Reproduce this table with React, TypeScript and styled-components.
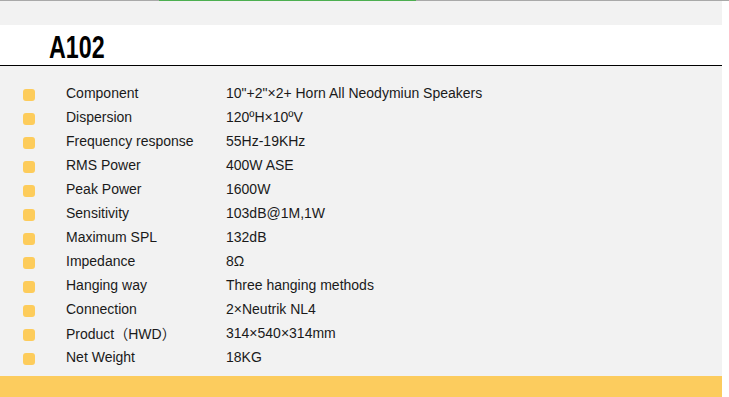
import React from 'react';
import styled, {createGlobalStyle} from 'styled-components';

const GlobalStyle = createGlobalStyle`
	html, body {
		margin: 0;
		padding: 0;
		background: #ffffff;
	}
	body {
		font-family: 'Liberation Sans', Arial, 'Noto Sans CJK SC', sans-serif;
		color: #1a1a1a;
	}
`;

const Page = styled.div`
	width: 722px;
	display: flex;
	flex-direction: column;
`;

const TopRule = styled.div`
	height: 1px;
	width: 729px;
	background: #a9a9a9;
	display: flex;
`;

const TopRuleAccent = styled.div`
	margin-left: 159px;
	width: 257px;
	height: 1px;
	background: #4caf50;
`;

const TopPanel = styled.div`
	height: 24px;
	background: #f2f2f2;
`;

const TitleBar = styled.div`
	height: 40px;
	background: #ffffff;
	border-bottom: 1px solid #000000;
	display: flex;
	align-items: center;
	padding-left: 49px;
`;

const Title = styled.h1`
	margin: 4px 0 0;
	font-family: 'Liberation Sans', Arial, sans-serif;
	font-size: 31px;
	font-weight: 700;
	color: #000000;
	line-height: 1;
	transform: scaleX(0.75);
	transform-origin: left center;
`;

const SpecPanel = styled.ul`
	list-style: none;
	margin: 0;
	padding: 15px 0 7px;
	background: #f2f2f2;
`;

const SpecRow = styled.li`
	height: 24px;
	display: flex;
	align-items: center;
	font-size: 14px;
`;

const Bullet = styled.span`
	width: 12px;
	height: 12px;
	margin-left: 23px;
	margin-top: 3px;
	border-radius: 3px;
	background: #fdcc5b;
	flex: none;
`;

const Label = styled.span`
	margin-left: 31px;
	width: 160px;
	flex: none;
`;

const Value = styled.span`
	white-space: nowrap;
`;

const FooterBand = styled.div`
	height: 21px;
	background: #fccc5e;
`;

const specs: [string, string][] = [
	['Component', '10"+2"×2+ Horn All Neodymiun Speakers'],
	['Dispersion', '120ºH×10ºV'],
	['Frequency response', '55Hz-19KHz'],
	['RMS Power', '400W ASE'],
	['Peak Power', '1600W'],
	['Sensitivity', '103dB@1M,1W'],
	['Maximum SPL', '132dB'],
	['Impedance', '8Ω'],
	['Hanging way', 'Three hanging methods'],
	['Connection', '2×Neutrik NL4'],
	['Product（HWD）', '314×540×314mm'],
	['Net Weight', '18KG'],
];

export default function App() {
	return (
		<>
			<GlobalStyle />
			<TopRule>
				<TopRuleAccent />
			</TopRule>
			<Page>
				<TopPanel />
				<TitleBar>
					<Title>A102</Title>
				</TitleBar>
				<SpecPanel>
					{specs.map(([label, value]) => (
						<SpecRow key={label}>
							<Bullet />
							<Label>{label}</Label>
							<Value>{value}</Value>
						</SpecRow>
					))}
				</SpecPanel>
				<FooterBand />
			</Page>
		</>
	);
}
